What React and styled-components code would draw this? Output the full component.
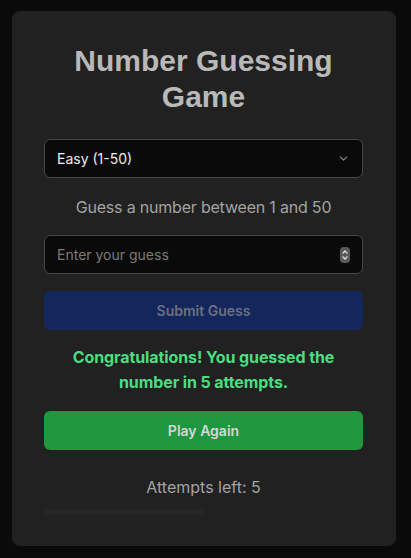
import React, { useState } from 'react';
import styled, { createGlobalStyle } from 'styled-components';

const Global = createGlobalStyle`
  html, body {
    margin: 0;
    background: #0a0a0a;
    font-family: Inter, "Noto Sans", sans-serif;
  }
  * { box-sizing: border-box; }
`

const Page = styled.div`
  display: flex;
  justify-content: flex-start;
  padding: 11px 15px 12px 12px;
  min-height: 558px;
`

const Card = styled.div`
  width: 384px;
  background: #212121;
  border-radius: 8px;
  padding: 32px 33px 30px 32px;
  display: flex;
  flex-direction: column;
`

const Title = styled.h1`
  margin: 0 0 24px;
  font-family: "Liberation Sans", Arial, sans-serif;
  font-weight: 700;
  font-size: 30px;
  line-height: 36px;
  color: #b9b9b9;
  text-align: center;
`

const Field = styled.div`
  height: 39px;
  background: #0a0a0a;
  border: 1px solid #474747;
  border-radius: 6px;
  display: flex;
  align-items: center;
  justify-content: space-between;
  padding: 0 12px 0 12px;
  font-size: 14px;
  color: ${({ muted }) => (muted ? '#7a7a7a' : '#ececec')};
`

const Hint = styled.p`
  margin: 17px 0 16px;
  font-size: 16px;
  line-height: 24px;
  letter-spacing: -0.2px;
  color: #a3a3a3;
  text-align: center;
`

const Button = styled.button`
  height: 39px;
  border: none;
  border-radius: 6px;
  background: ${({ bg }) => bg};
  color: ${({ fg }) => fg};
  font-family: Inter, sans-serif;
  font-size: 14px;
  font-weight: 600;
  cursor: pointer;
  margin-top: ${({ top }) => top || 0}px;
`

const Success = styled.p`
  margin: 15px 0 16px;
  padding: 0 20px;
  font-size: 16px;
  font-weight: 700;
  line-height: 25px;
  letter-spacing: -0.1px;
  color: #4ade80;
  text-align: center;
`

const Attempts = styled.p`
  margin: 25px 0 10px;
  font-size: 16px;
  line-height: 24px;
  color: #a3a3a3;
  text-align: center;
`

const History = styled.div`
  width: 160px;
  height: 6px;
  background: #252525;
  border-radius: 2px;
`

const Spinner = styled.span`
  width: 10px;
  height: 16px;
  border-radius: 4px;
  background: #5a5a5a;
  display: flex;
  align-items: center;
  justify-content: center;
`

const Chevron = () => (
  <svg width="13" height="13" viewBox="0 0 24 24" fill="none" stroke="#8a8a8a" strokeWidth="2" strokeLinecap="round" strokeLinejoin="round">
    <path d="M6 9l6 6 6-6" />
  </svg>
)

const SpinIcon = () => (
  <Spinner>
    <svg width="8" height="14" viewBox="0 0 8 14" fill="none" stroke="#e5e5e5" strokeWidth="1.2" strokeLinecap="round" strokeLinejoin="round">
      <path d="M2 5.2L4 3l2 2.2M2 8.8L4 11l2-2.2" />
    </svg>
  </Spinner>
)

export default function App() {
  const [level] = useState('Easy (1-50)')
  return (
    <>
      <Global />
      <Page>
        <Card>
          <Title>Number Guessing Game</Title>
          <Field>
            <span>{level}</span>
            <Chevron />
          </Field>
          <Hint>Guess a number between 1 and 50</Hint>
          <Field muted>
            <span>Enter your guess</span>
            <SpinIcon />
          </Field>
          <Button bg="#14275c" fg="#6b7080" top={17}>Submit Guess</Button>
          <Success>Congratulations! You guessed the number in 5 attempts.</Success>
          <Button bg="#1e973f" fg="#d6d6d6">Play Again</Button>
          <Attempts>Attempts left: 5</Attempts>
          <History />
        </Card>
      </Page>
    </>
  )
}
